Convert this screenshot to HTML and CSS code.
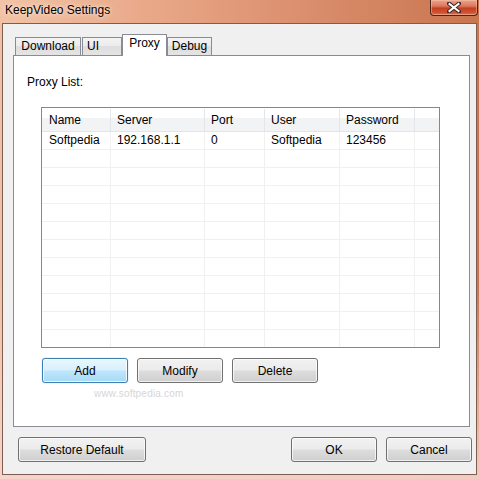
FILE: index.html
```html
<!DOCTYPE html>
<html>
<head>
<meta charset="utf-8">
<title>KeepVideo Settings</title>
<link rel="stylesheet" href="styles.css">
</head>
<body>
<div class="window">
  <div class="titlebar">
    <span class="title">KeepVideo Settings</span>
    <div class="close">
      <svg width="14" height="11" viewBox="0 0 14 11">
        <path d="M2 1.5 L12 9.5 M12 1.5 L2 9.5" stroke="#3a2a28" stroke-width="4" stroke-linecap="square" fill="none"/>
        <path d="M2.5 2 L11.5 9 M11.5 2 L2.5 9" stroke="#ffffff" stroke-width="2" stroke-linecap="square" fill="none"/>
      </svg>
    </div>
  </div>
  <div class="client">
    <div class="tabctl">
      <div class="tabs">
        <div class="tab t-download">Download</div>
        <div class="tab t-ui">UI</div>
        <div class="tab t-proxy active">Proxy</div>
        <div class="tab t-debug">Debug</div>
      </div>
      <div class="panel">
        <div class="label">Proxy List:</div>
        <div class="list">
          <div class="row head">
            <div class="cell c1">Name</div><div class="cell c2">Server</div><div class="cell c3">Port</div><div class="cell c4">User</div><div class="cell c5">Password</div><div class="cell c6"></div>
          </div>
          <div class="row">
            <div class="cell c1">Softpedia</div><div class="cell c2">192.168.1.1</div><div class="cell c3">0</div><div class="cell c4">Softpedia</div><div class="cell c5">123456</div><div class="cell c6"></div>
          </div>
          <div class="row"><div class="cell c1"></div><div class="cell c2"></div><div class="cell c3"></div><div class="cell c4"></div><div class="cell c5"></div><div class="cell c6"></div></div>
          <div class="row"><div class="cell c1"></div><div class="cell c2"></div><div class="cell c3"></div><div class="cell c4"></div><div class="cell c5"></div><div class="cell c6"></div></div>
          <div class="row"><div class="cell c1"></div><div class="cell c2"></div><div class="cell c3"></div><div class="cell c4"></div><div class="cell c5"></div><div class="cell c6"></div></div>
          <div class="row"><div class="cell c1"></div><div class="cell c2"></div><div class="cell c3"></div><div class="cell c4"></div><div class="cell c5"></div><div class="cell c6"></div></div>
          <div class="row"><div class="cell c1"></div><div class="cell c2"></div><div class="cell c3"></div><div class="cell c4"></div><div class="cell c5"></div><div class="cell c6"></div></div>
          <div class="row"><div class="cell c1"></div><div class="cell c2"></div><div class="cell c3"></div><div class="cell c4"></div><div class="cell c5"></div><div class="cell c6"></div></div>
          <div class="row"><div class="cell c1"></div><div class="cell c2"></div><div class="cell c3"></div><div class="cell c4"></div><div class="cell c5"></div><div class="cell c6"></div></div>
          <div class="row"><div class="cell c1"></div><div class="cell c2"></div><div class="cell c3"></div><div class="cell c4"></div><div class="cell c5"></div><div class="cell c6"></div></div>
          <div class="row"><div class="cell c1"></div><div class="cell c2"></div><div class="cell c3"></div><div class="cell c4"></div><div class="cell c5"></div><div class="cell c6"></div></div>
          <div class="row"><div class="cell c1"></div><div class="cell c2"></div><div class="cell c3"></div><div class="cell c4"></div><div class="cell c5"></div><div class="cell c6"></div></div>
          <div class="row"><div class="cell c1"></div><div class="cell c2"></div><div class="cell c3"></div><div class="cell c4"></div><div class="cell c5"></div><div class="cell c6"></div></div>
        </div>
        <div class="btnrow">
          <button class="btn default">Add</button>
          <button class="btn">Modify</button>
          <button class="btn">Delete</button>
        </div>
        <div class="watermark">www.softpedia.com</div>
      </div>
    </div>
    <div class="footer">
      <button class="btn wide">Restore Default</button>
      <div class="spacer"></div>
      <button class="btn">OK</button>
      <button class="btn">Cancel</button>
    </div>
  </div>
</div>
</body>
</html>
```
FILE: styles.css
```css
* { box-sizing: border-box; }
html, body { margin: 0; padding: 0; }
body {
  width: 479px;
  height: 479px;
  overflow: hidden;
  font-family: "Liberation Sans", Arial, sans-serif;
  font-size: 12px;
  color: #000;
}
.window {
  width: 479px;
  height: 479px;
  display: flex;
  flex-direction: column;
  background:
    linear-gradient(to bottom, rgba(255,255,255,0) 0, rgba(255,255,255,0) 60%, rgba(246,214,208,0.9) 100%),
    linear-gradient(to right, #f1c3a6 0%, #e9a989 30%, #dc9170 60%, #c9754f 100%);
}
.titlebar {
  height: 23px;
  display: flex;
  align-items: flex-start;
  flex: none;
}
.title {
  padding-left: 5px;
  padding-top: 3px;
  line-height: 14px;
  color: #000;
  text-shadow: 0 0 6px rgba(255,240,230,0.9), 0 0 3px rgba(255,240,230,0.8);
}
.close {
  margin-left: auto;
  margin-right: 1px;
  width: 48px;
  height: 16px;
  border: 1px solid #4c2419;
  border-top: none;
  border-radius: 0 0 4px 4px;
  background: linear-gradient(to bottom, #e9a48c 0%, #dc7a5c 40%, #c53f22 55%, #cf5434 85%, #e07a55 100%);
  box-shadow: inset 0 0 0 1px rgba(255,200,180,0.45);
  display: flex;
  align-items: center;
  justify-content: center;
}
.close svg { display: block; }
.client {
  flex: 1;
  margin: 0 2px 4px 2px;
  border: 1px solid #7e5d50;
  background: #f0f0f0;
  display: flex;
  flex-direction: column;
}
.tabctl {
  padding: 10px 6px 0 10px;
  display: flex;
  flex-direction: column;
}
.tabs {
  display: flex;
  align-items: flex-end;
  height: 21px;
  padding-left: 2px;
}
.tab {
  height: 18px;
  border: 1px solid #898c95;
  border-bottom: none;
  background: linear-gradient(to bottom, #f3f3f3 0%, #ebebeb 50%, #dedede 50%, #e4e4e4 100%);
  text-align: center;
  line-height: 17px;
}
.t-download { width: 66px; margin-right: 1px; }
.t-ui { width: 40px; text-align: left; padding-left: 4px; }
.t-proxy { width: 45px; }
.t-debug { width: 45px; }
.tab.active {
  height: 22px;
  margin-bottom: -1px;
  background: #ffffff;
  line-height: 16px;
  position: relative;
  z-index: 2;
}
.panel {
  height: 372px;
  border: 1px solid #898c95;
  background: #ffffff;
  padding: 19px 0 0 0;
  position: relative;
}
.label {
  line-height: 14px;
  padding-left: 13px;
}
.list {
  margin: 18px 0 0 27px;
  width: 399px;
  height: 241px;
  border: 1px solid #828790;
  overflow: hidden;
  background: #fff;
}
.row {
  display: flex;
  height: 18px;
  line-height: 17px;
}
.row.head {
  height: 24px;
  line-height: 22px;
  padding-top: 1px;
  background: linear-gradient(to bottom, #ffffff 0%, #ffffff 45%, #f2f3f5 45%, #f2f3f5 100%);
  border-bottom: 1px solid #e3e4e6;
}
.row.head .cell {
  border-right: 1px solid #e3e6ea;
  border-bottom: none;
  height: 22px;
}
.cell {
  border-right: 1px solid #f0f0f0;
  border-bottom: 1px solid #f0f0f0;
  padding-left: 6px;
  white-space: nowrap;
  overflow: hidden;
  flex: none;
}
.c1 { width: 69px; padding-left: 7px; }
.c2 { width: 94px; }
.c3 { width: 60px; }
.c4 { width: 75px; }
.c5 { width: 75px; }
.c6 { width: 24px; border-right: none; }
.row.head .c6 { border-right: none; }
.btnrow {
  display: flex;
  gap: 9px;
  margin: 10px 0 0 28px;
}
.btn {
  width: 86px;
  height: 25px;
  padding: 0;
  margin: 0;
  border: 1px solid #707070;
  border-radius: 3px;
  background: linear-gradient(to bottom, #f2f2f2 0%, #ebebeb 48%, #dddddd 52%, #cfcfcf 100%);
  box-shadow: inset 0 0 0 1px rgba(255,255,255,0.7);
  font-family: "Liberation Sans", Arial, sans-serif;
  font-size: 12px;
  color: #000;
  text-align: center;
  line-height: 22px;
}
.btn.default {
  border-color: #3c7fb1;
  background: linear-gradient(to bottom, #eaf6fd 0%, #d9f0fc 48%, #bee6fd 52%, #a7d9f5 100%);
  box-shadow: inset 0 0 0 1px rgba(255,255,255,0.8), 0 0 1px #48a2d8;
}
.watermark {
  position: absolute;
  left: 80px;
  top: 332px;
  font-size: 10px;
  color: #d6d6d6;
  letter-spacing: 0.2px;
}
.footer {
  display: flex;
  gap: 9px;
  padding: 10px 4px 0 15px;
}
.btn.wide { width: 128px; }
.spacer { flex: 1; }
```
